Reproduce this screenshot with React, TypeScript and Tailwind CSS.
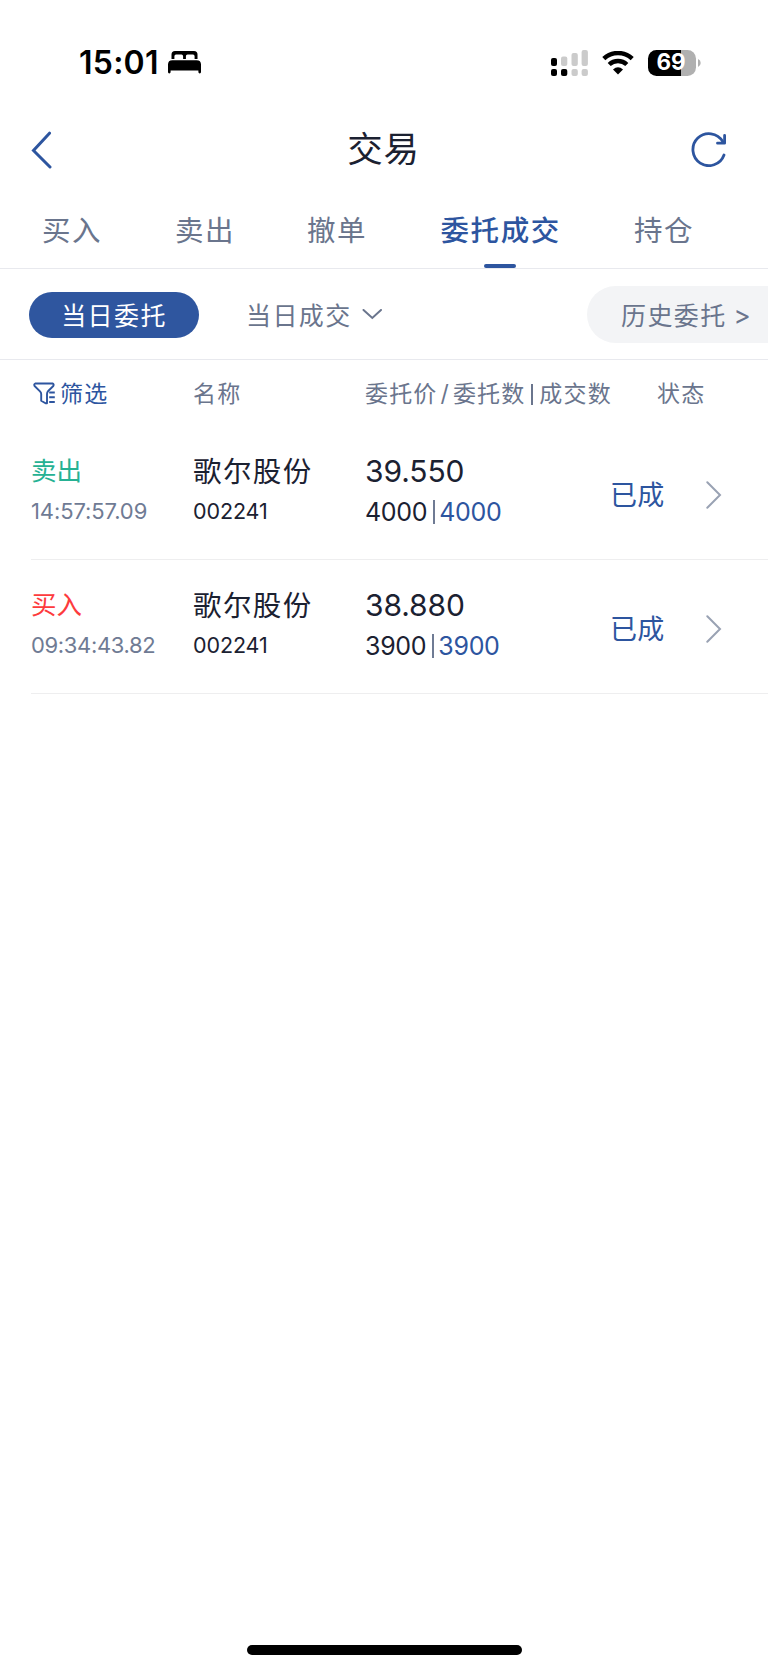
import React from "react";

type Order = {
  side: "卖出" | "买入";
  time: string;
  timeClass: string;
  name: string;
  code: string;
  price: string;
  placed: string;
  filled: string;
  status: string;
};

const orders: Order[] = [
  { side: "卖出", time: "14:57:57.09", timeClass: "tracking-[-0.1px]", name: "歌尔股份", code: "002241", price: "39.550", placed: "4000", filled: "4000", status: "已成" },
  { side: "买入", time: "09:34:43.82", timeClass: "tracking-[-0.35px]", name: "歌尔股份", code: "002241", price: "38.880", placed: "3900", filled: "3900", status: "已成" },
];

function StatusBar() {
  return (
    <div className="flex h-[107px] items-center pt-[18px] pl-[79px] text-black">
      <span className="w-[89px] text-[32px] font-semibold leading-none tracking-[0.250px] whitespace-nowrap">15:01</span>
      <svg className="block shrink-0" width="33" height="24" viewBox="0 0 33 24">
        <path d="M3.5 8V3.500Q3.5 0 7 0H26Q29.500 0 29.500 3.500V8H26.600V5.200Q26.600 3.600 25 3.600H19.500Q17.900 3.600 17.900 5.200V8H15.100V5.200Q15.100 3.600 13.500 3.600H8Q6.400 3.600 6.400 5.200V8Z" />
        <path d="M0 13.500Q0 9.200 4.400 9.200H28.600Q33 9.200 33 13.500V21Q33 22.400 31.700 22.400Q30.400 22.400 30.400 21V19.500H2.600V21Q2.600 22.400 1.300 22.400Q0 22.400 0 21Z" />
      </svg>
      <svg className="ml-[350px] block shrink-0" width="37" height="26" viewBox="0 0 37 26">
        <g fill="#000">
          <rect x="0" y="8" width="6" height="8" rx="2" />
          <rect x="0" y="19" width="6" height="7" rx="2" />
          <rect x="10" y="19" width="6.300" height="7" rx="2" />
        </g>
        <g fill="#cbcbcb">
          <rect x="10" y="6.500" width="6.300" height="9.500" rx="2" />
          <rect x="20.500" y="3" width="6.300" height="13" rx="2" />
          <rect x="30.600" y="0" width="6.300" height="16" rx="2" />
          <rect x="20.500" y="19" width="6.300" height="7" rx="2" />
          <rect x="30.600" y="19" width="6.300" height="7" rx="2" />
        </g>
      </svg>
      <svg className="ml-[14px] block shrink-0" width="32" height="24" viewBox="0 0 32 24">
        <path d="M1.800 7.700A20.500 20.500 0 0 1 30.200 7.700" fill="none" stroke="#000" strokeWidth="4.400" />
        <path d="M7.200 13.500A12.700 12.700 0 0 1 24.800 13.500" fill="none" stroke="#000" strokeWidth="4.400" />
        <path d="M16 23.500L11 18.400Q16 14.300 21 18.400Z" />
      </svg>
      <div className="ml-[14px] flex h-[26px] w-12 shrink-0 items-center justify-center rounded-[8.5px] bg-[linear-gradient(to_right,#000_69%,#b0b0b0_69%)]">
        <span className="pr-[2px] text-[22.500px] font-bold leading-none text-white">69</span>
      </div>
      <svg className="ml-[2px] block" width="3" height="8" viewBox="0 0 3 8">
        <path d="M0 0Q2.700 1.200 2.700 4T0 8Z" fill="#b0b0b0" />
      </svg>
    </div>
  );
}

function TitleBar() {
  return (
    <header className="flex h-[85px] items-center pr-[41px] pl-[30px] text-[#2d559f]">
      <svg className="block" width="22" height="38" viewBox="0 0 22 38" fill="none" stroke="currentColor" strokeWidth="3" strokeLinecap="round" strokeLinejoin="miter">
        <path d="M19.500 2.200L3.500 19.500L20 36" />
      </svg>
      <h1 className="flex-1 pl-[24px] text-center text-[35.500px] font-normal leading-none tracking-[0.800px] text-[#1b2131]">交易</h1>
      <svg className="mb-[2px] block" width="36" height="36" viewBox="0 0 36 36" fill="none" stroke="currentColor" strokeWidth="2.800" strokeLinecap="round" strokeLinejoin="round">
        <path d="M33 24A16 16 0 1 1 31.700 10.500" />
        <path d="M33.600 4.500V12.200H26.500" />
      </svg>
    </header>
  );
}

function Tabs() {
  return (
    <nav className="flex h-[77px] items-center border-b border-[#e8e9ee] pl-[42px] text-[28.500px] leading-none tracking-[1.400px] whitespace-nowrap text-[#6a758d]">
      <span className="w-[133px] pt-[2px]">买入</span>
      <span className="w-[132px] pt-[2px]">卖出</span>
      <span className="w-[133px] pt-[2px]">撤单</span>
      <span className="relative flex h-[76px] w-[194px] items-center pt-[2px] pl-[0.500px] font-medium tracking-[1.600px] text-[#2d559f]">
        委托成交
        <i className="absolute bottom-0 left-[44px] h-1 w-8 rounded-full bg-[#2d559f]" />
      </span>
      <span className="pt-[2px]">持仓</span>
    </nav>
  );
}

function Filters() {
  return (
    <div className="flex h-[91px] items-center overflow-hidden border-b border-[#e8e9ee] pt-[1px] pl-[29px] text-[25px] leading-none tracking-[1.400px] whitespace-nowrap text-[#6a758d]">
      <button className="h-[46px] w-[170px] shrink-0 rounded-full bg-[#2f569f] pt-[3px] text-white tracking-[1.400px]">当日委托</button>
      <button className="ml-[47px] flex shrink-0 items-center pt-[3px] tracking-[1.400px]">
        当日成交
        <svg className="mb-[2px] ml-[10px] block" width="21" height="12" viewBox="0 0 21 12" fill="none" stroke="currentColor" strokeWidth="2" strokeLinecap="round">
          <path d="M1.500 1L10.300 9L19 1" />
        </svg>
      </button>
      <button className="ml-auto flex h-[57px] w-[181px] shrink-0 items-center rounded-l-full bg-[#f3f4f6] pt-[3px] pl-[34px] text-left tracking-[1.400px]">
        历史委托<span className="pl-[7px] text-[26px]">&gt;</span>
      </button>
    </div>
  );
}

function ColumnHeads() {
  return (
    <div className="flex h-[66px] items-center pt-[2px] pl-[33px] text-[23px] leading-none tracking-[1.150px] whitespace-nowrap text-[#6a758d]">
      <div className="flex w-[160px] items-center text-[#2d559f]">
        <svg className="mr-[4px] mb-[2px] block" width="23" height="23" viewBox="0 0 23 23" fill="none" stroke="currentColor" strokeWidth="1.900" strokeLinejoin="round" strokeLinecap="butt">
          <path d="M2.200 1.500H19.600Q21.300 2.200 20.300 4L15.200 9Q14 10.200 14 12V21.300H12.500L8.200 18.800V12Q8.200 10.500 7 9.300L1.600 4Q0.600 2.200 2.200 1.500Z" />
          <path d="M16.200 10.500H21.800M16.200 15.200H21.800M16.200 20H21.800" />
        </svg>
        筛选
      </div>
      <span className="w-[172px]">名称</span>
      <span className="flex w-[292px] items-center">
        委托价<span className="px-[3px]">/</span>委托数
        <i className="mr-[6px] ml-[6px] h-[21px] w-[2px] bg-[#6a758d]" />
        成交数
      </span>
      <span>状态</span>
    </div>
  );
}

function OrderRow({ order }: { order: Order }) {
  return (
    <div className="ml-[31px] flex h-[134px] items-start border-b-[1.500px] border-[#eeeeef] pt-[28px] whitespace-nowrap text-[#1b2131]">
      <div className="w-[162px]">
        <div className={order.side === "卖出" ? "pb-[1px] text-[25.500px] leading-[34px] text-[#26b193]" : "pb-[1px] text-[25.500px] leading-[34px] text-[#fd3b3d]"}>{order.side}</div>
        <div className={`text-[22px] leading-[45px] text-[#6f7b94] ${order.timeClass}`}>{order.time}</div>
      </div>
      <div className="w-[172px]">
        <div className="text-[28.500px] leading-[35px] tracking-[1.400px]">{order.name}</div>
        <div className="text-[21.500px] leading-[45px] tracking-[-0.1px]">{order.code}</div>
      </div>
      <div className="w-[245px]">
        <div className="text-[30px] leading-[35px] tracking-[-0.1px]">{order.price}</div>
        <div className="flex h-[45px] items-center pt-[1px] text-[25px] leading-none tracking-[-0.300px]">
          {order.placed}
          <i className="mr-[4px] ml-[6px] h-6 w-[2px] bg-[#6f7b94]" />
          <span className="text-[#2d559f]">{order.filled}</span>
        </div>
      </div>
      <div className="flex h-[82px] items-center text-[27px] leading-none text-[#2d559f]">
        <span className="w-[96px] tracking-[0.300px]">{order.status}</span>
        <svg className="block" width="16" height="28" viewBox="0 0 16 28" fill="none" stroke="#99a2b3" strokeWidth="2" strokeLinecap="round">
          <path d="M1.300 1.300L14 14L1.300 26.700" />
        </svg>
      </div>
    </div>
  );
}

export default function App() {
  return (
    <main className="flex h-[1670px] w-[768px] flex-col overflow-hidden bg-white font-['Inter','Noto_Sans_CJK_SC',sans-serif]">
      <StatusBar />
      <TitleBar />
      <Tabs />
      <Filters />
      <ColumnHeads />
      <section>
        {orders.map((order) => (
          <OrderRow key={order.time} order={order} />
        ))}
      </section>
      <div className="mx-auto mt-auto mb-[15.500px] h-[10px] w-[275px] rounded-full bg-black" />
    </main>
  );
}
